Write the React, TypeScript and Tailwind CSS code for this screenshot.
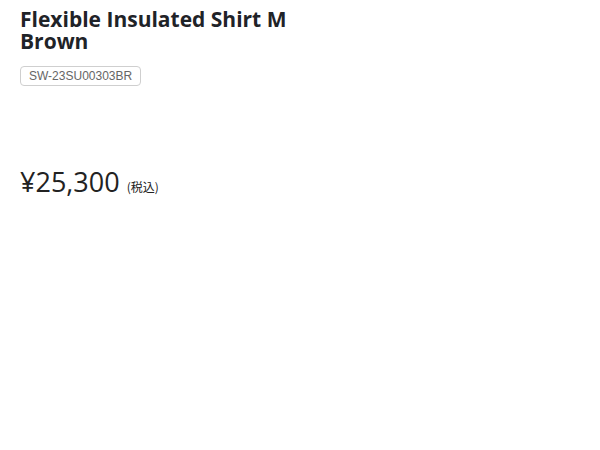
export default function App() {
  return (
    <div className="min-h-[450px] w-[600px] bg-white">
      <div className="w-[340px] px-5 pt-[8px]">
        <h1
          className="text-[21px] font-bold leading-[22px] text-[#1f2328]"
          style={{ fontFamily: '"Open Sans", sans-serif' }}
        >
          Flexible Insulated Shirt M Brown
        </h1>
        <div className="mt-[14px] flex">
          <span
            className="rounded-[4px] border border-[#cfcfcf] px-[8px] py-[1px] text-[12px] leading-[16px] text-[#666]"
            style={{ fontFamily: '"Liberation Sans", sans-serif' }}
          >
            SW-23SU00303BR
          </span>
        </div>
        <div
          className="mt-[81px] flex items-baseline gap-[7px] text-[#222]"
          style={{ fontFamily: '"Open Sans", "Noto Sans CJK JP", sans-serif' }}
        >
          <span className="text-[27px] leading-[30px]">¥25,300</span>
          <span className="text-[12px]" style={{ fontFamily: '"Noto Sans CJK JP", sans-serif' }}>
            (税込)
          </span>
        </div>
      </div>
    </div>
  );
}
